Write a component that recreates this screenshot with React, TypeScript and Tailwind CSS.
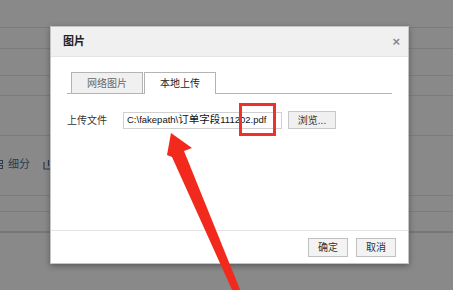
import React from "react";

const font = { fontFamily: '"Liberation Sans", "Noto Sans CJK SC", sans-serif' };

export default function App() {
  return (
    <div className="relative w-[453px] h-[290px] overflow-hidden bg-[#898989]" style={font}>
      {/* dimmed background page */}
      <div className="flex flex-col">
        <div className="h-[28px] border-b border-[#7c7c7c]" />
        <div className="h-[21px] border-b border-[#7c7c7c]" />
        <div className="h-[27px] border-b border-[#7c7c7c]" />
        <div className="h-[20px] border-b border-[#7c7c7c]" />
        <div className="h-[40px] border-b border-[#7c7c7c]" />
        <div className="h-[60px] border-b border-[#7c7c7c] flex items-center">
          <div className="flex items-center gap-[4px] -ml-[3px] -mt-[2px] text-[11px] text-[#2c3a4f]">
            <svg width="7" height="9" viewBox="0 0 7 9">
              <rect x="0.5" y="0.5" width="5" height="3" fill="none" stroke="#2c3a4f" />
              <rect x="0.5" y="5.5" width="5" height="3" fill="none" stroke="#2c3a4f" />
            </svg>
            <span>细分</span>
            <svg className="ml-[9px]" width="11" height="11" viewBox="0 0 11 11">
              <path d="M1 3 V10 H10 V3" fill="none" stroke="#2c3a4f" strokeWidth="1.2" />
              <path d="M5.5 1 V7" stroke="#2c3a4f" strokeWidth="1.2" />
            </svg>
          </div>
        </div>
        <div className="h-[16px] border-b border-[#7c7c7c]" />
        <div className="h-[21px] border-b-2 border-[#777777]" />
      </div>

      {/* dialog */}
      <div className="absolute left-[50px] top-[26px] w-[359px] h-[238px] bg-white border border-[#c4c4c4] shadow-[0_2px_6px_rgba(0,0,0,0.35)] flex flex-col">
        <div className="h-[30px] bg-[#f0f0f0] border-b border-[#e4e4e4] flex items-center justify-between pl-[12px] pr-[8px]">
          <span className="text-[11px] font-bold text-[#222]">图片</span>
          <span className="text-[13px] font-bold text-[#8a8a8a] leading-none">×</span>
        </div>
        <div className="flex-1 flex flex-col px-[16px] pt-[15px]">
          <div className="flex border-b border-[#b4b4b4] pl-[4px] gap-[1px] h-[22px]">
            <div className="w-[72px] h-[21px] bg-[#f0f0f0] border border-b-0 border-[#b4b4b4] flex items-center justify-center text-[10px] text-[#666]">
              网络图片
            </div>
            <div className="w-[72px] h-[22px] bg-white border border-b-0 border-[#b4b4b4] flex items-center justify-center text-[10px] text-[#222] -mb-[1px]">
              本地上传
            </div>
          </div>
          <div className="flex items-center mt-[17px]">
            <span className="w-[56px] text-[10px] text-[#333]">上传文件</span>
            <div className="w-[159px] h-[17px] border border-[#d0d0d0] flex items-center pl-[3px] text-[9.5px] text-[#111] whitespace-nowrap">
              C:\fakepath\<span className="text-[10.5px]">订单字段</span>111202.pdf
            </div>
            <div className="ml-[6px] w-[48px] h-[18px] bg-[#f0f0f0] border border-[#c8c8c8] flex items-center justify-center text-[10px] text-[#333]">
              浏览...
            </div>
          </div>
        </div>
        <div className="h-[33px] border-t border-[#e4e4e4] flex items-start justify-end gap-[8px] pt-[7px] pr-[12px]">
          <div className="w-[40px] h-[19px] bg-[#f3f3f3] border border-[#c0c0c0] flex items-center justify-center text-[10px] text-[#333]">
            确定
          </div>
          <div className="w-[40px] h-[19px] bg-[#f3f3f3] border border-[#c0c0c0] flex items-center justify-center text-[10px] text-[#333]">
            取消
          </div>
        </div>
      </div>

      {/* annotations */}
      <svg className="absolute left-0 top-0" width="453" height="290" viewBox="0 0 453 290">
        <rect x="240.5" y="104.5" width="34" height="30" fill="none" stroke="#f0302a" strokeWidth="3" />
        <polygon
          points="171,133 192,148 184,151 241,292 233,292 172,157 167,155"
          fill="#f22a1e"
        />
      </svg>
    </div>
  );
}
